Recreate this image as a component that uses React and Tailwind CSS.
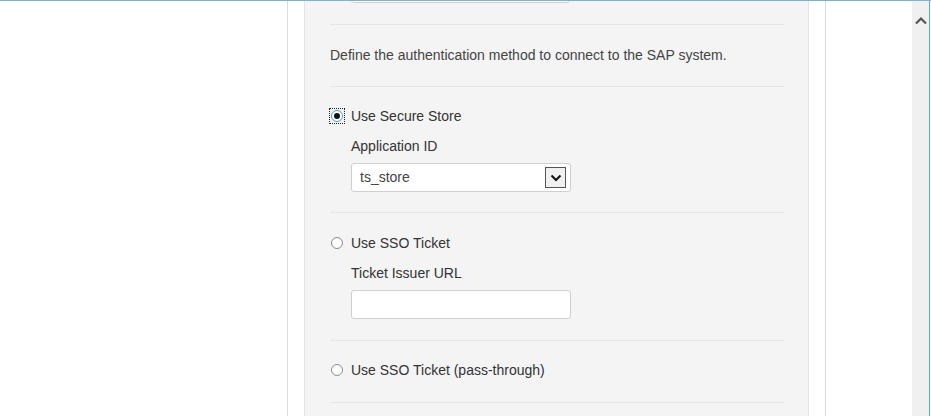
import React from 'react';

function Radio({ checked, focused }) {
  return (
    <span className={`flex items-center justify-center w-[14px] h-[14px] ${focused ? 'outline outline-1 outline-dotted outline-[#222]' : ''}`}>
      <span className={`flex items-center justify-center w-[12px] h-[12px] rounded-full border bg-white ${checked ? 'border-[#4a9fd8]' : 'border-[#8a8a8a]'}`}>
        {checked && <span className="w-[6px] h-[6px] rounded-full bg-[#111]" />}
      </span>
    </span>
  );
}

function Option({ label, checked, focused, children, pt = 'pt-[20px]', pb = 'pb-[21px]' }) {
  return (
    <div className={`border-b border-[#e6e6e6] ${pt} ${pb}`}>
      <label className="flex items-center gap-[7px] h-[18px]">
        <Radio checked={checked} focused={focused} />
        <span className="text-[14px] text-[#333]">{label}</span>
      </label>
      {children}
    </div>
  );
}

export default function App() {
  return (
    <div className="flex h-[416px] w-[931px] overflow-hidden bg-white border-t border-[#86aecd] font-['Liberation_Sans',Arial,sans-serif]">
      <div className="w-[288px] border-r border-[#dcdcdc]" />
      <div className="w-[16px]" />
      <div className="w-[505px] bg-[#f4f4f4] border-l border-r border-[#e4e4e4] pl-[25px] pr-[24px]">
        <div className="-mt-[26px] pb-[21px] border-b border-[#e6e6e6]">
          <div className="ml-[21px] w-[219px] h-[28px] bg-white border border-[#cfcfcf] rounded-[3px]" />
        </div>
        <div className="border-b border-[#e6e6e6] pt-[21px] pb-[22px]">
          <p className="text-[14px] leading-[18px] text-[#444]">Define the authentication method to connect to the SAP system.</p>
        </div>
        <Option label="Use Secure Store" checked focused pt="pt-[20px]" pb="pb-[20px]">
          <div className="ml-[21px] mt-[12px] text-[14px] leading-[18px] text-[#333]">Application ID</div>
          <div className="ml-[21px] mt-[8px] w-[220px] h-[29px] bg-white border border-[#cfcfcf] rounded-[3px] flex items-center justify-between pl-[8px] pr-[4px]">
            <span className="text-[14px] text-[#444]">ts_store</span>
            <span className="w-[21px] h-[21px] border border-[#555] bg-[#f0f0f0] flex items-center justify-center">
              <svg width="12" height="8" viewBox="0 0 12 8"><path d="M1.5 1.5 L6 6 L10.5 1.5" fill="none" stroke="#111" strokeWidth="2" /></svg>
            </span>
          </div>
        </Option>
        <Option label="Use SSO Ticket" pt="pt-[21px]" pb="pb-[21px]">
          <div className="ml-[21px] mt-[12px] text-[14px] leading-[18px] text-[#333]">Ticket Issuer URL</div>
          <div className="ml-[21px] mt-[8px] w-[220px] h-[29px] bg-white border border-[#cfcfcf] rounded-[3px]" />
        </Option>
        <Option label="Use SSO Ticket (pass-through)" pt="pt-[20px]" pb="pb-[23px]" />
      </div>
      <div className="w-[16px]" />
      <div className="w-[87px] border-l border-[#dcdcdc]" />
      <div className="w-[17px] bg-[#f0f0f0] flex justify-center pt-[15px]">
        <svg width="12" height="9" viewBox="0 0 12 9"><path d="M1 7.5 L6 2.5 L11 7.5" fill="none" stroke="#555" strokeWidth="2.2" /></svg>
      </div>
      <div className="w-[1px] bg-[#41b4f0]" />
    </div>
  );
}
